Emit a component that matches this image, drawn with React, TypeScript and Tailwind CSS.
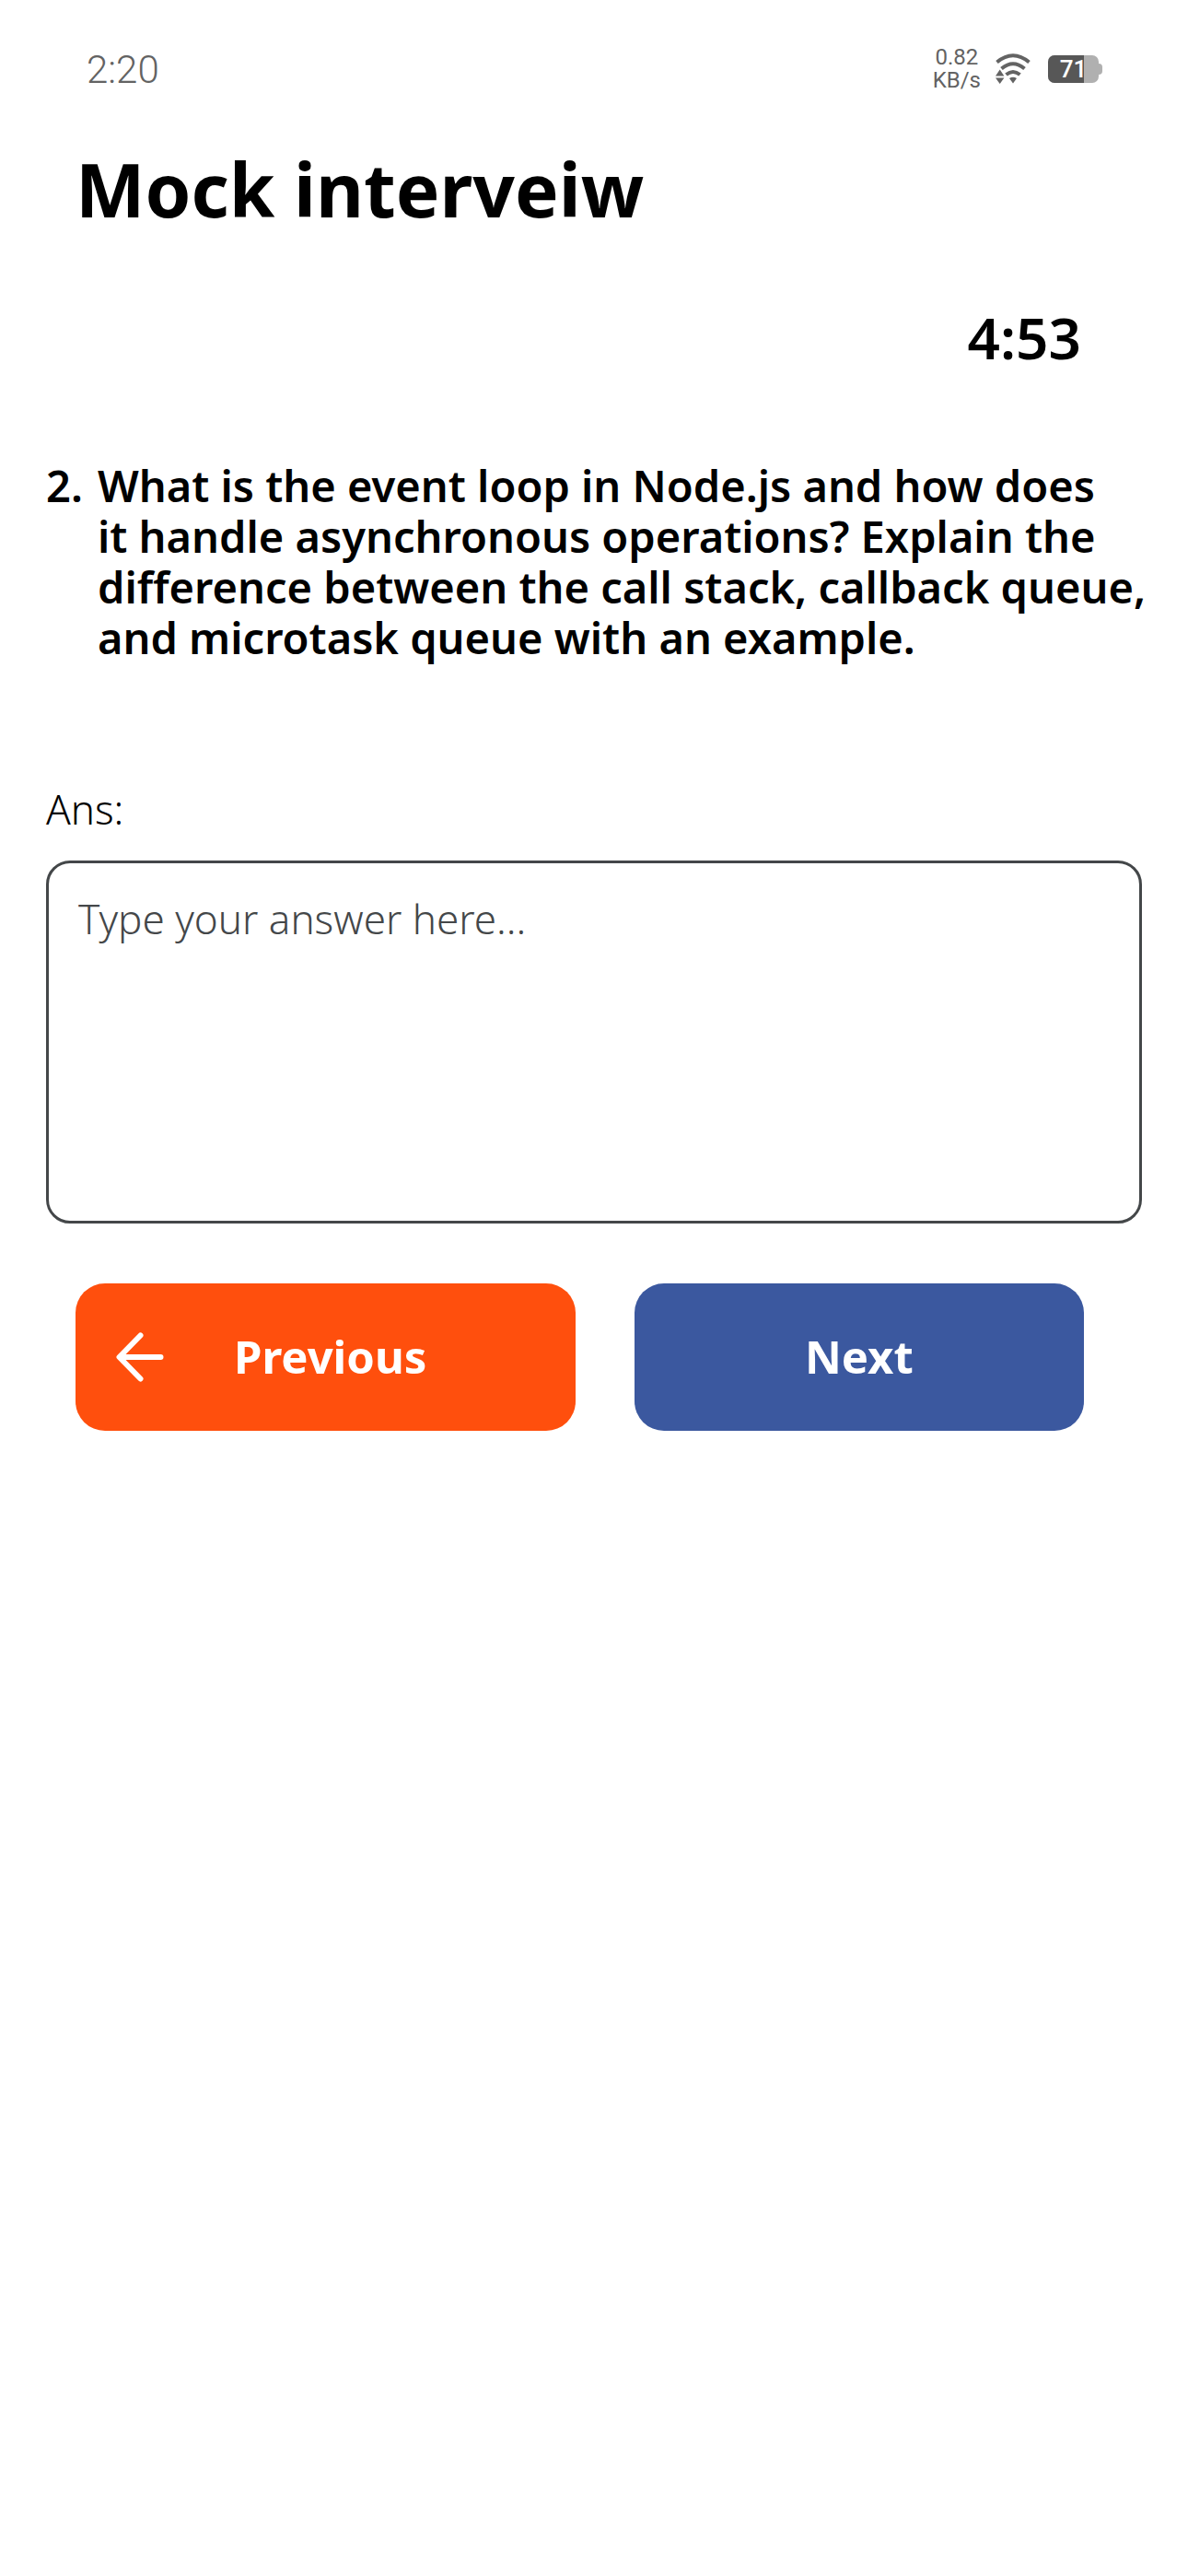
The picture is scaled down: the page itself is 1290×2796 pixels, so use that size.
import { useState } from "react";

function WifiIcon() {
    return (
        <svg viewBox="0 0 38 34" className="h-[34px] w-[38px]" fill="none" aria-hidden="true">
            <g stroke="#636363" strokeWidth="4">
                <path d="M1.5 9.5 Q19 -5 36.5 9.5" />
                <path d="M6.5 16.5 Q19 6 31.5 16.5" />
                <path d="M11.5 23 Q19 17 26.5 23" />
            </g>
            <g fill="#636363">
                <path d="M15 27 Q19 24.5 23 27 L19 32.5 Z" />
                <path d="M0 24.5 L4.7 17.5 L9.4 24.5 Z" />
                <path d="M0 26.5 L9.4 26.5 L4.7 33 Z" />
            </g>
        </svg>
    );
}

function Battery({ level }: { level: number }) {
    return (
        <div className="flex items-center">
            <div className="relative flex h-[30px] w-[55px] items-center justify-center overflow-hidden rounded-[7px] bg-[#b0b0b0]">
                <div className="absolute inset-y-0 left-0 bg-[#575757]" style={{ width: `${level}%` }} />
                <span className="relative font-['Roboto',sans-serif] text-[26px] font-medium text-white">{level}</span>
            </div>
            <div className="h-3 w-1 rounded-r-sm bg-[#b0b0b0]" />
        </div>
    );
}

function StatusBar() {
    return (
        <header className="flex h-[150px] items-center justify-between pr-[93px] pl-[94px] font-['Roboto',sans-serif] text-[#636363]">
            <span className="text-[42px] font-[350]">2:20</span>
            <div className="flex items-center">
                <div className="text-center text-2xl leading-[25px]">
                    0.82
                    <br />
                    KB/s
                </div>
                <div className="ml-4">
                    <WifiIcon />
                </div>
                <div className="ml-[19px]">
                    <Battery level={71} />
                </div>
            </div>
        </header>
    );
}

export default function App() {
    const [answer, setAnswer] = useState("");

    return (
        <div className="min-h-screen bg-white font-['Noto_Sans',sans-serif] text-black">
            <StatusBar />
            <main className="px-[50px]">
                <h1 className="px-8 text-[80px] leading-[110px] font-bold">Mock interveiw</h1>
                <p className="mt-[66px] px-[66px] text-right text-[62px] leading-[80px] font-semibold">4:53</p>
                <div className="mt-[94px] flex text-[47px] leading-[55px] font-semibold">
                    <span className="w-14 shrink-0">2.</span>
                    <p className="whitespace-nowrap">
                        What is the event loop in Node.js and how does
                        <br />
                        it handle asynchronous operations? Explain the
                        <br />
                        difference between the call stack, callback queue,
                        <br />
                        and microtask queue with an example.
                    </p>
                </div>
                <label htmlFor="answer" className="mt-32 block text-[44px] leading-[60px] font-[350]">
                    Ans:
                </label>
                <textarea
                    id="answer"
                    value={answer}
                    onChange={(e) => setAnswer(e.target.value)}
                    placeholder="Type your answer here..."
                    className="mt-[26px] block h-[394px] w-full resize-none rounded-[26px] border-3 border-[#444749] px-8 py-[30px] text-[44px] leading-[60px] font-[350] outline-none placeholder:text-[#444749]"
                />
                <div className="mt-[65px] mr-[63px] ml-8 grid grid-cols-[10fr_9fr] gap-16">
                    <button
                        type="button"
                        className="flex h-40 items-center gap-[76px] rounded-[32px] bg-[#ff4f0d] px-11 text-[49px] font-bold text-white"
                    >
                        <svg viewBox="0 0 52 54" className="h-[54px] w-[52px]" fill="none" aria-hidden="true">
                            <path
                                d="M26.5 3.5 L3.5 27 L26.5 50.5 M4 27 H48.5"
                                stroke="currentColor"
                                strokeWidth="6"
                                strokeLinecap="round"
                                strokeLinejoin="round"
                            />
                        </svg>
                        Previous
                    </button>
                    <button type="button" className="h-40 rounded-[32px] bg-[#3b589f] text-[49px] font-bold text-white">
                        Next
                    </button>
                </div>
            </main>
        </div>
    );
}
